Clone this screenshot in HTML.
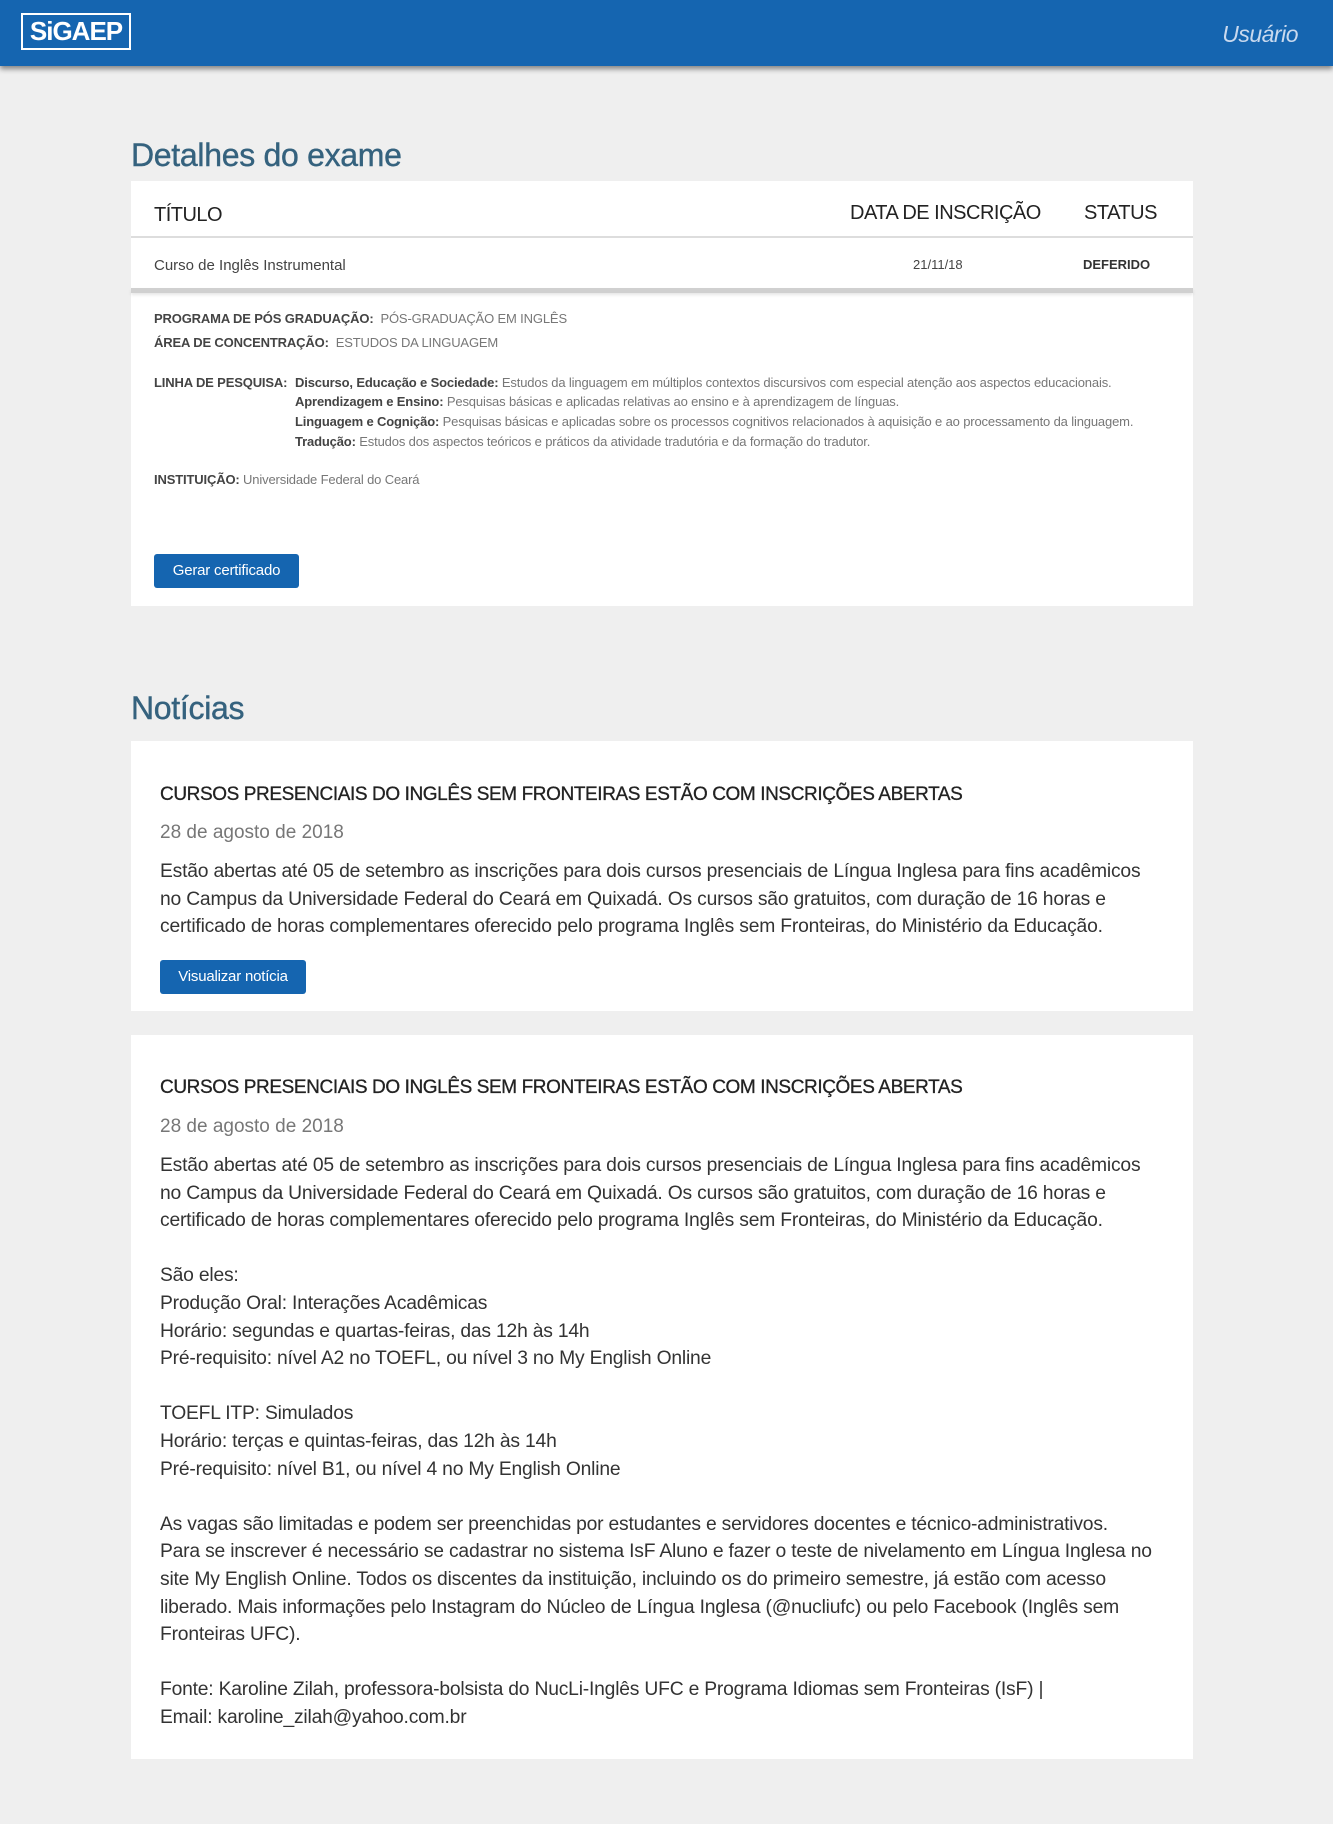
<!DOCTYPE html>
<html><head><meta charset="utf-8"><style>
*{margin:0;padding:0;box-sizing:border-box}
body{width:1333px;height:1824px;background:#efefef;font-family:"Liberation Sans",sans-serif;color:#333;position:relative;overflow:hidden}
.a{position:absolute;white-space:nowrap}
.hdr{position:absolute;left:0;top:0;width:1333px;height:66px;background:#1565b0;box-shadow:0 3px 5px rgba(0,0,0,.45)}
.logo{position:absolute;left:21px;top:13px;width:110px;height:37px;border:2px solid #fff;color:#fff;font-size:26px;line-height:33px;text-align:center;letter-spacing:-1px;font-weight:bold}
.user{right:35px;top:21px;color:#c9d9ee;font-style:italic;font-size:23px;letter-spacing:-.5px}
h2{position:absolute;font-weight:normal;color:#35627e;font-size:32px;letter-spacing:-.3px;white-space:nowrap;-webkit-text-stroke:.4px #35627e}
.card{position:absolute;left:131px;width:1062px;background:#fff}
.th{font-size:20px;color:#222;letter-spacing:-.5px}
.sm{font-size:13px;color:#777;letter-spacing:-.15px;line-height:20px}
.sm b{color:#444}
.btn{position:absolute;background:#1565b0;color:#fff;border-radius:3px;font-size:15px;text-align:center;letter-spacing:-.2px}
.nt{font-size:19px;color:#222;letter-spacing:-.4px;line-height:28px;-webkit-text-stroke:.3px #222}
.nd{font-size:19px;color:#777;line-height:28px}
.nb{font-size:19.3px;color:#333;line-height:27.6px;letter-spacing:-.2px;white-space:nowrap}
</style></head><body>
<div class="hdr"><div class="logo">SiGAEP</div><div class="a user">Usuário</div></div>

<h2 style="left:131px;top:137px">Detalhes do exame</h2>
<div class="card" style="top:181px;height:425px">
  <div class="a th" style="left:23px;top:23px">TÍTULO</div>
  <div class="a th" style="left:719px;top:21px">DATA DE INSCRIÇÃO</div>
  <div class="a th" style="left:953px;top:21px">STATUS</div>
  <div style="position:absolute;left:0;top:55px;width:1062px;height:2px;background:#ddd"></div>
  <div class="a" style="left:23px;top:76px;font-size:15px;color:#444">Curso de Inglês Instrumental</div>
  <div class="a" style="left:782px;top:76px;font-size:13px;color:#444">21/11/18</div>
  <div class="a" style="left:952px;top:76px;font-size:13px;color:#333;font-weight:bold">DEFERIDO</div>
  <div style="position:absolute;left:0;top:107px;width:1062px;height:5px;background:#d0d0d0;box-shadow:0 2px 3px rgba(0,0,0,.1)"></div>
  <div class="a sm" style="left:23px;top:128px"><b>PROGRAMA DE PÓS GRADUAÇÃO:</b>&nbsp; PÓS-GRADUAÇÃO EM INGLÊS</div>
  <div class="a sm" style="left:23px;top:152px"><b>ÁREA DE CONCENTRAÇÃO:</b>&nbsp; ESTUDOS DA LINGUAGEM</div>
  <div class="a sm" style="left:23px;top:192px"><b>LINHA DE PESQUISA:</b></div>
  <div class="a sm" style="left:164px;top:192px"><b>Discurso, Educação e Sociedade:</b> Estudos da linguagem em múltiplos contextos discursivos com especial atenção aos aspectos educacionais.</div>
  <div class="a sm" style="left:164px;top:211px"><b>Aprendizagem e Ensino:</b> Pesquisas básicas e aplicadas relativas ao ensino e à aprendizagem de línguas.</div>
  <div class="a sm" style="left:164px;top:231px"><b>Linguagem e Cognição:</b> Pesquisas básicas e aplicadas sobre os processos cognitivos relacionados à aquisição e ao processamento da linguagem.</div>
  <div class="a sm" style="left:164px;top:251px"><b>Tradução:</b> Estudos dos aspectos teóricos e práticos da atividade tradutória e da formação do tradutor.</div>
  <div class="a sm" style="left:23px;top:289px"><b>INSTITUIÇÃO:</b> Universidade Federal do Ceará</div>
  <div class="btn" style="left:23px;top:373px;width:145px;height:34px;line-height:34px">Gerar certificado</div>
</div>

<h2 style="left:131px;top:690px">Notícias</h2>
<div class="card" style="top:741px;height:270px">
  <div class="a nt" style="left:29px;top:40px">CURSOS PRESENCIAIS DO INGLÊS SEM FRONTEIRAS ESTÃO COM INSCRIÇÕES ABERTAS</div>
  <div class="a nd" style="left:29px;top:78px">28 de agosto de 2018</div>
  <div class="a nb" style="left:29px;top:117px">Estão abertas até 05 de setembro as inscrições para dois cursos presenciais de Língua Inglesa para fins acadêmicos<br>no Campus da Universidade Federal do Ceará em Quixadá. Os cursos são gratuitos, com duração de 16 horas e<br>certificado de horas complementares oferecido pelo programa Inglês sem Fronteiras, do Ministério da Educação.</div>
  <div class="btn" style="left:29px;top:219px;width:146px;height:34px;line-height:34px">Visualizar notícia</div>
</div>

<div class="card" style="top:1035px;height:724px">
  <div class="a nt" style="left:29px;top:39px">CURSOS PRESENCIAIS DO INGLÊS SEM FRONTEIRAS ESTÃO COM INSCRIÇÕES ABERTAS</div>
  <div class="a nd" style="left:29px;top:78px">28 de agosto de 2018</div>
  <div class="a nb" style="left:29px;top:117px">Estão abertas até 05 de setembro as inscrições para dois cursos presenciais de Língua Inglesa para fins acadêmicos<br>no Campus da Universidade Federal do Ceará em Quixadá. Os cursos são gratuitos, com duração de 16 horas e<br>certificado de horas complementares oferecido pelo programa Inglês sem Fronteiras, do Ministério da Educação.<br><br>São eles:<br>Produção Oral: Interações Acadêmicas<br>Horário: segundas e quartas-feiras, das 12h às 14h<br>Pré-requisito: nível A2 no TOEFL, ou nível 3 no My English Online<br><br>TOEFL ITP: Simulados<br>Horário: terças e quintas-feiras, das 12h às 14h<br>Pré-requisito: nível B1, ou nível 4 no My English Online<br><br>As vagas são limitadas e podem ser preenchidas por estudantes e servidores docentes e técnico-administrativos.<br>Para se inscrever é necessário se cadastrar no sistema IsF Aluno e fazer o teste de nivelamento em Língua Inglesa no<br>site My English Online. Todos os discentes da instituição, incluindo os do primeiro semestre, já estão com acesso<br>liberado. Mais informações pelo Instagram do Núcleo de Língua Inglesa (@nucliufc) ou pelo Facebook (Inglês sem<br>Fronteiras UFC).<br><br>Fonte: Karoline Zilah, professora-bolsista do NucLi-Inglês UFC e Programa Idiomas sem Fronteiras (IsF) |<br>Email: karoline_zilah@yahoo.com.br</div>
</div>
</body></html>
